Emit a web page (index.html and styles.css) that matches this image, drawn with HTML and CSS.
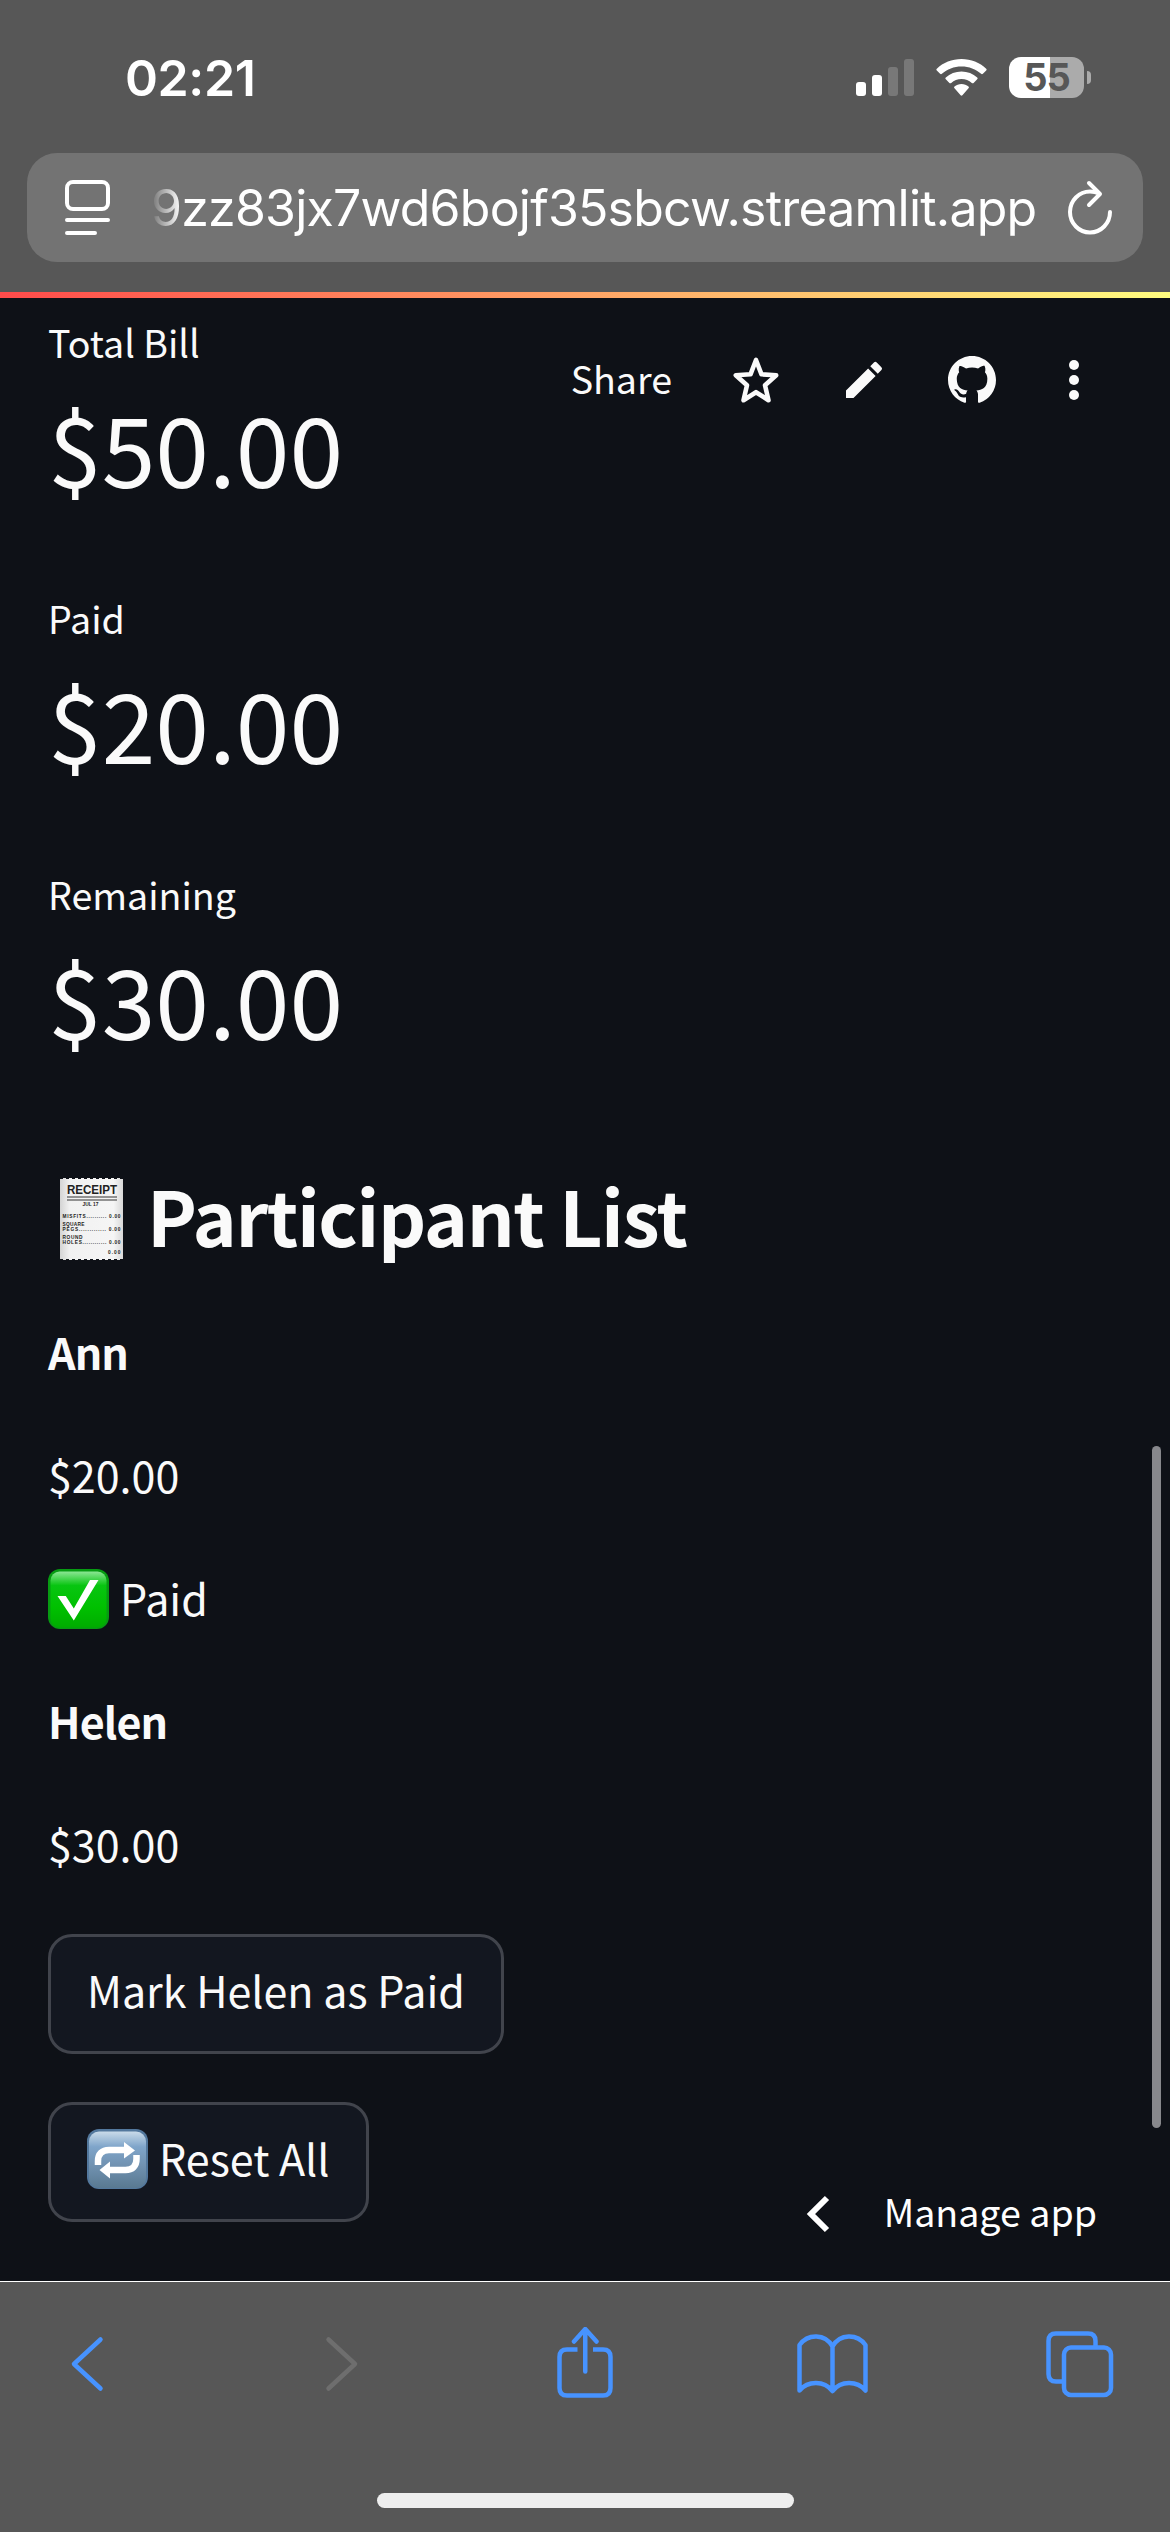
FILE: index.html
```html
<!DOCTYPE html>
<html lang="en">
<head>
    <meta charset="UTF-8">
    <meta name="viewport" content="width=device-width, initial-scale=1.0">
    <title>Bill Splitter</title>
    <link rel="stylesheet" href="styles.css">
</head>
<body>
    <div class="screen">
        <header class="browser-top">
            <div class="status-bar">
                <span class="time">02:21</span>
                <div class="status-icons">
                    <svg class="signal" width="58" height="37" viewBox="0 0 58 37" fill="#fff">
                        <rect x="0" y="23" width="10" height="14" rx="3"/>
                        <rect x="16" y="16" width="10" height="21" rx="3"/>
                        <rect x="32" y="8" width="10" height="29" rx="3" opacity=".2"/>
                        <rect x="48" y="0" width="10" height="37" rx="3" opacity=".2"/>
                    </svg>
                    <svg class="wifi" width="51" height="37" viewBox="0 0 51 37" fill="#fff">
                        <path d="M25.500 0C35 0 43.800 3.500 50.200 9.700c.6.6.6 1.200 0 1.800l-3.300 3.300c-.6.6-1.200.6-1.800 0C39.900 10 33 7.400 25.500 7.400S11.100 10 5.900 14.800c-.6.6-1.200.6-1.800 0L.8 11.500c-.6-.6-.6-1.200 0-1.800C7.200 3.500 16 0 25.500 0z"/>
                        <path d="M25.500 12.500c6 0 11.500 2.200 15.700 6 .6.6.6 1.200 0 1.800l-3.600 3.600c-.6.600-1.200.5-1.800 0-2.800-2.400-6.300-3.900-10.300-3.900s-7.500 1.500-10.300 3.900c-.6.500-1.200.6-1.800 0l-3.600-3.600c-.6-.6-.6-1.200 0-1.800 4.200-3.800 9.700-6 15.700-6z"/>
                        <path d="M25.500 25c2.700 0 5.100.9 7 2.500.6.500.6 1.200 0 1.800l-6.100 6.900c-.6.6-1.200.6-1.800 0l-6.100-6.900c-.6-.6-.6-1.300 0-1.800 1.900-1.600 4.300-2.500 7-2.500z"/>
                    </svg>
                    <div class="battery"><span>55</span></div>
                    <div class="battery-cap"></div>
                </div>
            </div>
            <div class="address-bar">
                <svg width="46" height="56" viewBox="0 0 46 56" fill="none" stroke="#fff" stroke-width="4" stroke-linecap="round">
                    <rect x="2" y="2" width="41" height="27" rx="6"/>
                    <path d="M2 40h41M2 53h28"/>
                </svg>
                <div class="url">9zz83jx7wd6bojf35sbcw.streamlit.app</div>
                <svg width="46" height="56" viewBox="0 0 46 56" fill="none" stroke="#fff" stroke-width="4" stroke-linecap="round" stroke-linejoin="round">
                    <path d="M32 13.500C29 12 26 11.500 23 11.500A20 20.500 0 1 0 43 32"/>
                    <path d="M22 3l11 11-11 11"/>
                </svg>
            </div>
        </header>

        <main class="app">
            <div class="decoration"></div>
            <div class="toolbar">
                <span>Share</span>
                <svg width="48" height="48" viewBox="0 0 48 48" fill="none" stroke="#fafafa" stroke-width="4.600" stroke-linejoin="round">
                    <path d="M24 4l5.500 14.300 14.700 1-11.200 10 3.500 14.900L24 36.200l-12.500 8L15 29.300l-11.200-10 14.700-1z"/>
                </svg>
                <svg width="48" height="48" viewBox="0 0 24 24" fill="#fafafa">
                    <path d="M3 17.250V21h3.750L17.810 9.940l-3.750-3.750L3 17.250zM20.710 7.040a.996.996 0 0 0 0-1.410l-2.340-2.340a.996.996 0 0 0-1.410 0l-1.830 1.830 3.750 3.750 1.830-1.830z"/>
                </svg>
                <svg width="48" height="48" viewBox="0 0 16 16" fill="#fafafa">
                    <path d="M8 0C3.580 0 0 3.580 0 8c0 3.540 2.290 6.530 5.470 7.590.4.07.55-.17.55-.38 0-.19-.01-.82-.01-1.490-2.010.37-2.530-.49-2.690-.94-.09-.23-.48-.94-.82-1.130-.28-.15-.68-.52-.01-.53.63-.01 1.080.58 1.230.82.72 1.210 1.870.87 2.330.66.07-.52.28-.87.51-1.070-1.780-.2-3.640-.89-3.640-3.950 0-.87.31-1.590.82-2.150-.08-.2-.36-1.020.08-2.120 0 0 .67-.21 2.200.82.64-.18 1.320-.27 2-.27s1.360.09 2 .27c1.530-1.040 2.200-.82 2.200-.82.44 1.100.16 1.920.08 2.120.51.56.82 1.270.82 2.150 0 3.070-1.870 3.750-3.650 3.950.29.25.54.73.54 1.480 0 1.070-.01 1.930-.01 2.200 0 .21.15.46.55.38A8.010 8.010 0 0 0 16 8c0-4.420-3.580-8-8-8z"/>
                </svg>
                <svg class="more" width="48" height="48" viewBox="0 0 48 48" fill="#fafafa">
                    <circle cx="24" cy="9" r="5"/>
                    <circle cx="24" cy="24" r="5"/>
                    <circle cx="24" cy="39" r="5"/>
                </svg>
            </div>

            <section class="metric">
                <div class="metric-label">Total Bill</div>
                <div class="metric-value">$50.00</div>
            </section>
            <section class="metric">
                <div class="metric-label">Paid</div>
                <div class="metric-value">$20.00</div>
            </section>
            <section class="metric">
                <div class="metric-label">Remaining</div>
                <div class="metric-value">$30.00</div>
            </section>

            <h2 class="heading">
                <svg class="receipt" width="63" height="82" viewBox="0 0 63 82">
                    <defs>
                        <linearGradient id="paper">
                            <stop offset="0" stop-color="#d4d4d4"/>
                            <stop offset=".15" stop-color="#f1f1f1"/>
                            <stop offset=".85" stop-color="#f5f5f5"/>
                            <stop offset="1" stop-color="#d8d8d8"/>
                        </linearGradient>
                    </defs>
                    <rect width="63" height="82" fill="url(#paper)"/>
                    <path d="M0 .5h63M0 81.500h63" stroke="#0e1117" stroke-dasharray="3 3"/>
                    <path d="M7 19h50M7 22h50" stroke="#333" stroke-width="1.200"/>
                    <text class="receipt-title" x="7" y="16" textLength="50" lengthAdjust="spacingAndGlyphs">RECEIPT</text>
                    <g class="receipt-lines">
                        <text x="22.500" y="28" textLength="16">JUL 17</text>
                        <text x="2.500" y="39.500" textLength="58">MISFITS.......... 0.00</text>
                        <text x="2.500" y="48" textLength="22">SQUARE</text>
                        <text x="2.500" y="52.800" textLength="58">PEGS............. 0.00</text>
                        <text x="2.500" y="61" textLength="20">ROUND</text>
                        <text x="2.500" y="66" textLength="58">HOLES............ 0.00</text>
                        <text x="48" y="75.500" textLength="12.500">0.00</text>
                    </g>
                </svg>
                Participant List
            </h2>

            <div class="participants">
                <p class="name">Ann</p>
                <p>$20.00</p>
                <p class="paid">
                    <svg width="61" height="60" viewBox="0 0 61 60">
                        <defs>
                            <linearGradient id="green" x2="0" y2="1">
                                <stop offset="0" stop-color="#8be694"/>
                                <stop offset=".25" stop-color="#08c511"/>
                                <stop offset=".65" stop-color="#00c000"/>
                                <stop offset="1" stop-color="#00ac00"/>
                            </linearGradient>
                        </defs>
                        <rect width="61" height="60" rx="12" fill="#079b12"/>
                        <rect x="2.500" y="2.500" width="56" height="56" rx="9" fill="url(#green)"/>
                        <path d="M9.500 27h8.300l8 12.500L42 11h8.500L25.800 51.500z" fill="#fff"/>
                    </svg>
                    Paid
                </p>
                <p class="name">Helen</p>
                <p>$30.00</p>
            </div>

            <div class="actions">
                <button>Mark Helen as Paid</button>
                <button class="reset">
                    <svg width="61" height="60" viewBox="0 0 61 60">
                        <defs>
                            <linearGradient id="steel" x2="0" y2="1">
                                <stop offset="0" stop-color="#cadbe9"/>
                                <stop offset=".27" stop-color="#7fa5ca"/>
                                <stop offset=".6" stop-color="#7192b1"/>
                                <stop offset="1" stop-color="#597991"/>
                            </linearGradient>
                        </defs>
                        <rect width="61" height="60" rx="12" fill="#53789d"/>
                        <rect x="2" y="2.500" width="57" height="56.500" rx="10" fill="url(#steel)"/>
                        <path d="M11 36v-4c0-7 4-11 11-11h17M49.500 26v4c0 7-4 11-11 11H21" fill="none" stroke="#fff" stroke-width="6.500"/>
                        <path d="M37 13l11 8.500L37 29.500zM23 32.500L12.500 41 23 49.500z" fill="#fff"/>
                    </svg>
                    Reset All
                </button>
            </div>

            <div class="manage">
                <svg width="24" height="38" viewBox="0 0 24 38" fill="none" stroke="#fff" stroke-width="6">
                    <path d="M21 3L5 19l16 16"/>
                </svg>
                <span>Manage app</span>
            </div>
            <div class="scrollbar"></div>
        </main>

        <footer class="browser-bottom">
            <nav class="nav">
                <svg width="72" height="74" viewBox="-20 0 72 74">
                    <path d="M29.500 12.500L3 37l26.500 24.500"/>
                </svg>
                <svg class="disabled" width="72" height="74" viewBox="-27 0 72 74">
                    <path d="M2.500 12.500L29 37 2.500 61.500"/>
                </svg>
                <svg width="72" height="74" viewBox="-9 0 72 74">
                    <path d="M20.500 22.500H10q-7.500 0-7.500 7.500v31q0 7.500 7.500 7.500h36q7.500 0 7.500-7.500V30q0-7.500-7.500-7.500H36" stroke-linecap="butt"/>
                    <path d="M28.250 44.500V3M17 14.500L28.250 2 39.500 14.500"/>
                </svg>
                <svg width="72" height="74" viewBox="-1 0 72 74">
                    <path d="M35.500 19.500C28 6.500 11 6.500 2.500 18v45.500C11 53.500 27 53.500 35.500 64 44 53.500 60 53.500 68.500 63.500V18C60 6.500 43 6.500 35.500 19.500zM35.500 19.500V64"/>
                </svg>
                <svg width="72" height="74" viewBox="-1.500 0 72 74">
                    <path d="M50 19.500V14q0-7.500-7.500-7.500h-32Q3 6.500 3 14v33q0 7.500 7.500 7.500H17" stroke-linecap="butt"/>
                    <rect x="18.500" y="20.500" width="47" height="47.500" rx="7"/>
                </svg>
            </nav>
            <div class="home-indicator"></div>
        </footer>
    </div>
</body>
</html>
```
FILE: styles.css
```css
* {
    margin: 0;
    padding: 0;
    box-sizing: border-box;
}

body {
    background-color: #575757;
    color: #fafafa;
    font-family: 'Noto Sans CJK SC', 'Source Sans Pro', sans-serif;
}

svg {
    display: block;
    flex-shrink: 0;
}

.screen {
    width: 1170px;
    height: 2532px;
    display: flex;
    flex-direction: column;
    overflow: hidden;
}

/* Browser chrome */
.browser-top {
    height: 292px;
    background-color: #575757;
    color: #fff;
    font-family: Inter, sans-serif;
}

.status-bar {
    height: 153px;
    padding: 2px 79px 0 125px;
    display: flex;
    align-items: center;
    justify-content: space-between;
}

.time {
    font-size: 50px;
    font-weight: 600;
    letter-spacing: -0.4px;
}

.status-icons {
    display: flex;
    align-items: center;
}

.wifi {
    margin-left: 22px;
}

.battery {
    width: 75px;
    height: 41px;
    margin-left: 22px;
    border-radius: 12px;
    background: linear-gradient(to right, #fff 41px, #ababab 41px);
    color: #575757;
    font-size: 38px;
    font-weight: 700;
    line-height: 41px;
    text-align: center;
    letter-spacing: -1px;
}

.battery-cap {
    width: 4px;
    height: 13px;
    margin-left: 3px;
    border-radius: 0 5px 5px 0;
    background-color: #ababab;
}

.address-bar {
    height: 109px;
    margin: 0 27px;
    padding: 0 30px 0 38px;
    border-radius: 30px;
    background-color: #737373;
    display: flex;
    align-items: center;
}

.url {
    flex: 1;
    margin-left: 40px;
    font-size: 50px;
    letter-spacing: -0.78px;
    white-space: nowrap;
    -webkit-mask-image: linear-gradient(to right, transparent, #000 30px);
    mask-image: linear-gradient(to right, transparent, #000 30px);
}

/* App */
.app {
    position: relative;
    height: 1989px;
    padding: 0 48px;
    background-color: #0e1117;
}

.decoration {
    height: 6px;
    margin: 0 -48px 12px;
    background: linear-gradient(to right, #ff4b4b, #fffd80);
}

.toolbar {
    position: absolute;
    top: 64px;
    right: 72px;
    height: 48px;
    display: flex;
    align-items: center;
    gap: 60px;
    font-size: 37.6px;
    line-height: 48px;
}

.toolbar span {
    padding-bottom: 4px;
}

.toolbar .more {
    margin-left: -6px;
}

.metric {
    height: 276px;
}

.metric-label {
    font-size: 37.6px;
    line-height: 63px;
}

.metric-value {
    font-size: 96.7px;
    line-height: 146px;
}

.heading {
    display: flex;
    align-items: center;
    margin-top: 32px;
    font-size: 75px;
    font-weight: 700;
    line-height: 90px;
    letter-spacing: -1.4px;
}

.receipt {
    margin: 7px 24px 0 12px;
    letter-spacing: 0;
}

.receipt text {
    fill: #222;
    font-family: 'Liberation Sans', sans-serif;
    font-weight: 700;
}

.receipt-title {
    font-size: 13px;
}

.receipt-lines {
    font-size: 4.8px;
}

.participants {
    display: flex;
    flex-direction: column;
    gap: 51px;
    margin-top: 55px;
    font-size: 43px;
    line-height: 72px;
}

.name {
    font-weight: 700;
    letter-spacing: -0.9px;
}

.paid {
    display: flex;
    align-items: center;
    gap: 11px;
}

.paid svg {
    margin-top: 4px;
}

.actions {
    display: flex;
    flex-direction: column;
    align-items: flex-start;
    gap: 48px;
    margin-top: 55px;
}

button {
    height: 120px;
    padding: 0 36px 11px;
    border: 3px solid #41444c;
    border-radius: 24px;
    background-color: #131720;
    color: #fafafa;
    font-family: inherit;
    font-size: 43px;
    line-height: 72px;
}

.reset {
    display: flex;
    align-items: center;
    gap: 11px;
}

.reset svg {
    margin-top: 5px;
}

.manage {
    position: absolute;
    right: 73px;
    bottom: 36px;
    display: flex;
    align-items: center;
    gap: 54px;
    color: #fff;
    font-size: 37.6px;
    line-height: 58px;
}

.manage span {
    padding-bottom: 5px;
}

.scrollbar {
    position: absolute;
    top: 1154px;
    right: 9px;
    width: 9px;
    height: 682px;
    border-radius: 5px;
    background-color: #87888c;
}

/* Bottom bar */
.browser-bottom {
    height: 251px;
    border-top: 1px solid #fff;
    background-color: #575757;
}

.nav {
    height: 211px;
    padding: 45px 54px 0 51px;
    display: flex;
    justify-content: space-between;
}

.nav svg {
    fill: none;
    stroke: #4793ff;
    stroke-width: 4.5;
    stroke-linecap: round;
    stroke-linejoin: round;
}

.nav .disabled {
    stroke: #6e6e6e;
}

.home-indicator {
    width: 417px;
    height: 15px;
    margin: 0 auto;
    border-radius: 8px;
    background-color: #eee;
}
```
